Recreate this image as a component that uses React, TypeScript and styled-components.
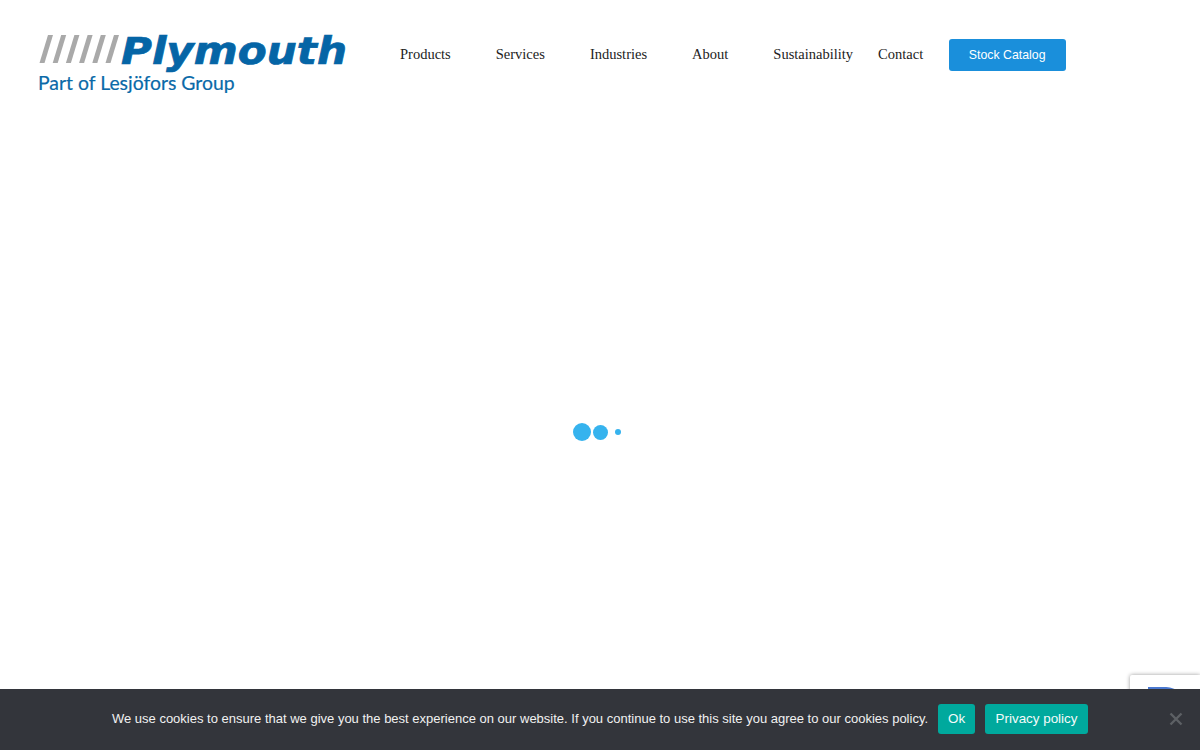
import React from 'react'
import styled, { createGlobalStyle } from 'styled-components'

const NAV_ITEMS = [
  { label: 'Products', gap: 45 },
  { label: 'Services', gap: 45 },
  { label: 'Industries', gap: 45 },
  { label: 'About', gap: 45 },
  { label: 'Sustainability', gap: 25 },
  { label: 'Contact', gap: 25 },
]

const LOADER_DOTS = [18, 15, 6]
const SLASHES = [0, 1, 2, 3, 4, 5]

const GlobalStyle = createGlobalStyle`
  html, body {
    margin: 0;
    height: 100%;
    overflow: hidden;
    background: #fff;
  }
`

const Page = styled.div`
  display: flex;
  flex-direction: column;
  height: 100vh;
`

const Header = styled.header`
  display: flex;
  align-items: flex-start;
  height: 114px;
  padding: 35px 0 0 38px;
  box-sizing: border-box;
`

const Logo = styled.a`
  display: flex;
  flex-direction: column;
  width: 362px;
  flex-shrink: 0;
`

const LogoMark = styled.div`
  display: flex;
  align-items: flex-start;
  height: 36px;
`

const LogoName = styled.span`
  font-family: 'DejaVu Sans', sans-serif;
  font-weight: 700;
  font-style: italic;
  font-size: 37px;
  line-height: 30px;
  margin-top: 2px;
  color: #0565a6;
  -webkit-text-stroke: 0.7px #0565a6;
  transform: scaleX(1.14);
  transform-origin: left center;
`

const LogoTagline = styled.span`
  font-family: Lato, sans-serif;
  font-size: 19.4px;
  line-height: 24px;
  color: #0a6aa8;
  -webkit-text-stroke: 0.2px #0a6aa8;
`

const Nav = styled.nav`
  display: flex;
  align-items: center;
  height: 32px;
  margin-top: 4px;
`

const NavLink = styled.a<{ $gap: number }>`
  font-family: 'Liberation Serif', serif;
  font-size: 14.5px;
  color: #222;
  margin-right: ${(p) => p.$gap}px;
  margin-top: -2px;
`

const CatalogButton = styled.a`
  display: flex;
  align-items: center;
  justify-content: center;
  width: 117px;
  height: 32px;
  margin-left: 0.5px;
  border-radius: 3px;
  background: #1a8fdb;
  color: #fff;
  font-family: 'Liberation Sans', sans-serif;
  font-size: 12.32px;
`

const Main = styled.main`
  flex: 1;
  display: flex;
  align-items: center;
  justify-content: center;
`

const Loader = styled.div`
  display: flex;
  align-items: center;
`

const LoaderSlot = styled.div`
  display: flex;
  align-items: center;
  justify-content: center;
  width: 18px;
  height: 18px;
`

const LoaderDot = styled.span<{ $size: number }>`
  width: ${(p) => p.$size}px;
  height: ${(p) => p.$size}px;
  border-radius: 50%;
  background: #36b3ee;
`

const RecaptchaBadge = styled.div`
  position: fixed;
  top: 675px;
  right: 0;
  width: 70px;
  height: 60px;
  background: #fff;
  box-shadow: 0 0 4px rgba(0, 0, 0, 0.4);
  border-radius: 2px 0 0 2px;
  display: flex;
  padding: 10px 0 0 18px;
  box-sizing: border-box;
`

const CookieBar = styled.div`
  position: fixed;
  left: 0;
  right: 0;
  bottom: 0;
  height: 61px;
  display: flex;
  align-items: center;
  justify-content: center;
  gap: 10px;
  padding-bottom: 2px;
  box-sizing: border-box;
  background: #33353b;
  color: #fff;
  font-family: 'Liberation Sans', sans-serif;
  font-size: 13px;
`

const CookieText = styled.span`
  color: #f1f1f1;
`

const CookieButton = styled.a<{ $width: number }>`
  display: flex;
  align-items: center;
  justify-content: center;
  width: ${(p) => p.$width}px;
  height: 30px;
  border-radius: 3px;
  background: #00a99d;
  color: #f4fbfa;
  font-size: 13.4px;
`

const CookieClose = styled.button`
  position: absolute;
  top: 23px;
  right: 17px;
  display: flex;
  padding: 0;
  border: 0;
  background: none;
  color: #5d6064;
`

export default function App() {
  return (
    <Page>
      <GlobalStyle />
      <Header>
        <Logo>
          <LogoMark>
            <svg width="83" height="29" viewBox="0 0 83 29" fill="#a9a9a9">
              {SLASHES.map((i) => (
                <path key={i} d={`M${1.5 + i * 13.2} 28 L${10 + i * 13.2} 0 H${15 + i * 13.2} L${6.5 + i * 13.2} 28 Z`} />
              ))}
            </svg>
            <LogoName>Plymouth</LogoName>
          </LogoMark>
          <LogoTagline>Part of Lesjöfors Group</LogoTagline>
        </Logo>
        <Nav>
          {NAV_ITEMS.map((item) => (
            <NavLink key={item.label} $gap={item.gap}>
              {item.label}
            </NavLink>
          ))}
          <CatalogButton>Stock Catalog</CatalogButton>
        </Nav>
      </Header>
      <Main>
        <Loader>
          {LOADER_DOTS.map((size) => (
            <LoaderSlot key={size}>
              <LoaderDot $size={size} />
            </LoaderSlot>
          ))}
        </Loader>
      </Main>
      <RecaptchaBadge>
        <svg width="30" height="30" viewBox="0 0 30 30">
          <path d="M0 2 H16 C22 2 26 3 29 6 V14 H0 Z" fill="#4a78d0" />
        </svg>
      </RecaptchaBadge>
      <CookieBar>
        <CookieText>
          We use cookies to ensure that we give you the best experience on our website. If you continue to use this site you agree to our cookies policy.
        </CookieText>
        <CookieButton $width={37}>Ok</CookieButton>
        <CookieButton $width={103}>Privacy policy</CookieButton>
        <CookieClose aria-label="Close">
          <svg width="14" height="14" viewBox="0 0 14 14" stroke="currentColor" strokeWidth="2.4">
            <path d="M1.5 1.5 L12.5 12.5 M12.5 1.5 L1.5 12.5" />
          </svg>
        </CookieClose>
      </CookieBar>
    </Page>
  )
}
